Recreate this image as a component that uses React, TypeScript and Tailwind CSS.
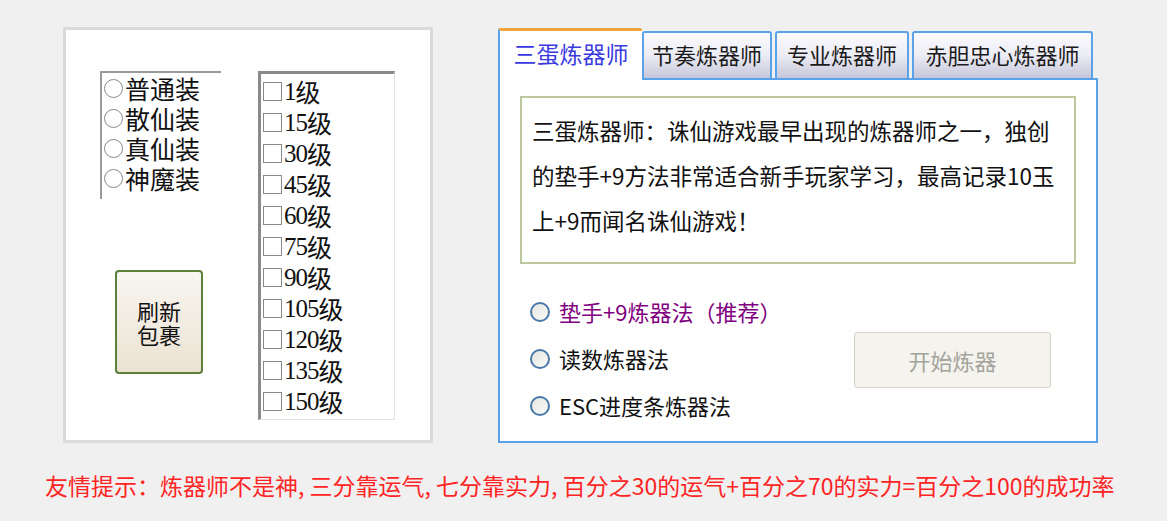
import React, { useState } from 'react';

const suits = ['普通装', '散仙装', '真仙装', '神魔装'];
const levels = ['1', '15', '30', '45', '60', '75', '90', '105', '120', '135', '150'];
const tabs = [
  { name: '三蛋炼器师', w: 'w-[144px]' },
  { name: '节奏炼器师', w: 'w-[130px]' },
  { name: '专业炼器师', w: 'w-[134px]' },
  { name: '赤胆忠心炼器师', w: 'w-[181px]' },
];
const methods = [
  { label: '垫手+9炼器法（推荐）', color: 'text-[#800080]' },
  { label: '读数炼器法', color: 'text-[#111]' },
  { label: 'ESC进度条炼器法', color: 'text-[#111]' },
];

const Radio: React.FC = () => (
  <span className="inline-block w-[20px] h-[20px] rounded-full border-2 border-[#4a78a8] bg-linear-to-br from-[#e4e4e0] to-[#fbfbf8] shrink-0" />
);

const App: React.FC = () => {
  const [tab] = useState(0);

  return (
    <div className="w-[1167px] h-[521px] bg-[#f0f0f0] font-['Noto_Sans_CJK_SC',sans-serif] overflow-hidden">
      <div className="flex pl-[63px] pt-[27px] gap-[65px]">
        {/* left panel */}
        <div className="w-[370px] h-[416px] bg-white border-[3px] border-[#dadada] flex pl-[34px] pt-[41px] gap-[37px]">
          <div className="flex flex-col w-[121px]">
            <div className="h-[128px] border-t-2 border-l-2 border-[#9a9a9a]">
              {suits.map((s) => (
                <div key={s} className="flex items-center h-[31px] -mt-[1px] first:mt-0 text-[25px] text-[#111] leading-[25px]">
                  <span className="inline-block w-[19px] h-[19px] rounded-full border border-[#8a8a8a] mx-[2px] shrink-0" />
                  <span>{s}</span>
                </div>
              ))}
            </div>
            <button className="mt-[71px] ml-[15px] w-[88px] h-[104px] rounded-[4px] border-2 border-[#5c7f3c] bg-linear-to-b from-[#f8f6f1] to-[#ebe2d2] text-[22px] leading-[24px] text-[#111] flex flex-col items-center justify-center">
              <span>刷新</span>
              <span>包裹</span>
            </button>
          </div>
          <div className="w-[137px] h-[349px] border-t-[3px] border-l-[3px] border-[#8a8a8a] border-r border-b border-r-[#e2e2e2] border-b-[#e2e2e2] pt-[2px] pl-[2px]">
            {levels.map((l) => (
              <div key={l} className="flex items-center h-[31px] text-[25px] text-[#111] leading-[25px]">
                <span className="inline-block w-[19px] h-[19px] border border-[#8a8a8a] mr-[2px] shrink-0" />
                <span className="font-['Liberation_Serif',serif] tracking-[-1px]">{l}</span>
                <span>级</span>
              </div>
            ))}
          </div>
        </div>

        {/* right panel */}
        <div className="w-[600px] flex flex-col">
          <div className="flex items-end h-[51px] gap-[3px]">
            {tabs.map((t, i) =>
              i === tab ? (
                <div
                  key={t.name}
                  className={`${t.w} h-[52px] -mb-[2px] pb-[4px] relative z-10 bg-white border-t-[3px] border-t-[#f2a23a] border-l-2 border-l-[#5aa2ea] flex items-center justify-center text-[23px] text-[#3a3ae0] rounded-t-[2px]`}
                >
                  {t.name}
                </div>
              ) : (
                <div
                  key={t.name}
                  className={`${t.w} h-[47px] pb-[2px] border-2 border-b-0 border-[#5aa2ea] rounded-t-[3px] bg-linear-to-b from-[#fafafe] via-[#ececf4] to-[#c6c6da] flex items-center justify-center text-[22px] text-[#1a1a1a] ${i === 1 ? '-ml-[3px]' : ''}`}
                >
                  {t.name}
                </div>
              )
            )}
          </div>
          <div className="h-[365px] border-2 border-[#5aa2ea] bg-white pl-[20px] pt-[16px]">
            <div className="w-[556px] h-[168px] border-2 border-[#bcc79e] pl-[10px] pt-[10px] text-[22.5px] leading-[45px] text-[#111]">
              三蛋炼器师：诛仙游戏最早出现的炼器师之一，独创
              <br />
              的垫手+9方法非常适合新手玩家学习，最高记录10玉
              <br />
              上+9而闻名诛仙游戏！
            </div>
            <div className="flex mt-[24px]">
              <div className="flex flex-col pl-[10px] w-[334px]">
                {methods.map((m) => (
                  <div key={m.label} className={`flex items-center h-[47px] gap-[9px] text-[22px] ${m.color}`}>
                    <Radio />
                    <span>{m.label}</span>
                  </div>
                ))}
              </div>
              <button
                disabled
                className="mt-[44px] w-[197px] h-[56px] rounded-[3px] border border-[#d4d1c4] bg-[#f4f3ee] text-[22px] text-[#a4a49c]"
              >
                开始炼器
              </button>
            </div>
          </div>
        </div>
      </div>
      <div className="pl-[45px] mt-[27px] text-[23px] leading-[30px] text-[#ff2424] whitespace-nowrap">
        友情提示：炼器师不是神, 三分靠运气, 七分靠实力, 百分之30的运气+百分之70的实力=百分之100的成功率
      </div>
    </div>
  );
};

export default App;
